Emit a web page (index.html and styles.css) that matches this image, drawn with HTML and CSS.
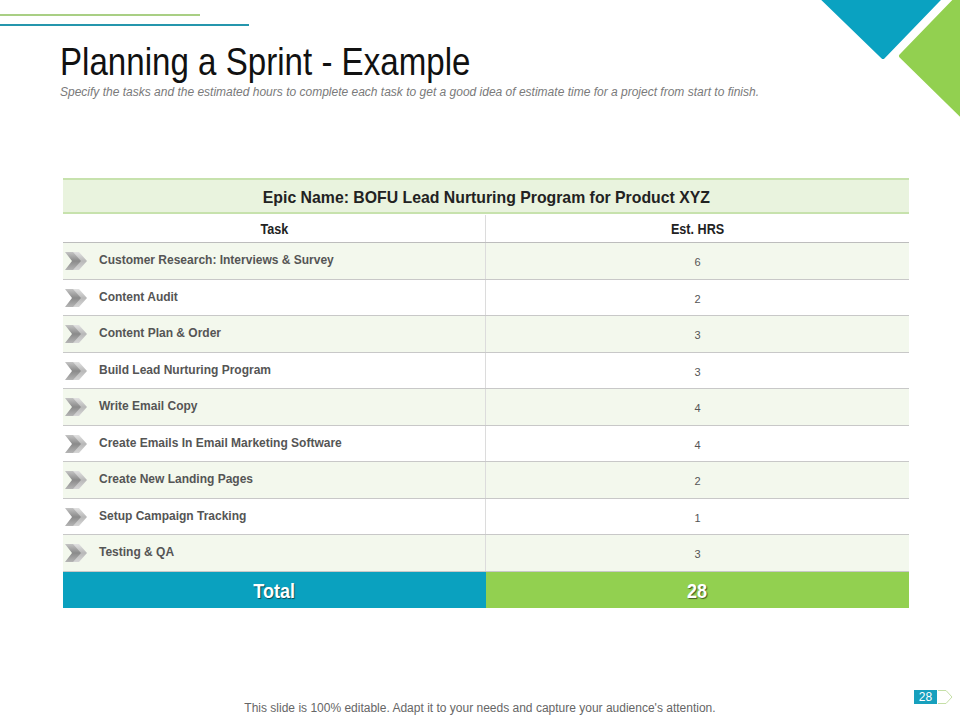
FILE: index.html
```html
<!DOCTYPE html>
<html>
<head>
<meta charset="utf-8">
<link rel="stylesheet" href="styles.css">
</head>
<body>
<div class="slide">
  <svg class="corner" width="160" height="120" viewBox="0 0 160 120">
    <polygon points="20,-4 142,-4 83,57" fill="#0aa2c1" stroke="#0aa2c1" stroke-width="4" stroke-linejoin="round"/>
    <polygon points="101,56 157,-2 164,-2 164,118" fill="#92d050" stroke="#92d050" stroke-width="4" stroke-linejoin="round"/>
  </svg>
  <div class="lines">
    <div class="line line-green"></div>
    <div class="line line-teal"></div>
  </div>
  <header class="head">
    <h1 class="title"><span class="narrow">Planning a Sprint - Example</span></h1>
    <p class="subtitle">Specify the tasks and the estimated hours to complete each task to get a good idea of estimate time for a project from start to finish.</p>
  </header>

  <section class="table">
    <div class="epic"><span class="narrow">Epic Name: BOFU Lead Nurturing Program for Product XYZ</span></div>
    <div class="row colhead">
      <div class="cell task-h"><span class="narrow">Task</span></div>
      <div class="cell"><span class="narrow">Est. HRS</span></div>
    </div>
    <div class="row tint">
      <div class="cell task"><svg class="chev" viewBox="0 0 24 20"><use href="#chv"/></svg><span>Customer Research: Interviews &amp; Survey</span></div>
      <div class="cell num">6</div>
    </div>
    <div class="row">
      <div class="cell task"><svg class="chev" viewBox="0 0 24 20"><use href="#chv"/></svg><span>Content Audit</span></div>
      <div class="cell num">2</div>
    </div>
    <div class="row tint">
      <div class="cell task"><svg class="chev" viewBox="0 0 24 20"><use href="#chv"/></svg><span>Content Plan &amp; Order</span></div>
      <div class="cell num">3</div>
    </div>
    <div class="row">
      <div class="cell task"><svg class="chev" viewBox="0 0 24 20"><use href="#chv"/></svg><span>Build Lead Nurturing Program</span></div>
      <div class="cell num">3</div>
    </div>
    <div class="row tint">
      <div class="cell task"><svg class="chev" viewBox="0 0 24 20"><use href="#chv"/></svg><span>Write Email Copy</span></div>
      <div class="cell num">4</div>
    </div>
    <div class="row">
      <div class="cell task"><svg class="chev" viewBox="0 0 24 20"><use href="#chv"/></svg><span>Create Emails In Email Marketing Software</span></div>
      <div class="cell num">4</div>
    </div>
    <div class="row tint">
      <div class="cell task"><svg class="chev" viewBox="0 0 24 20"><use href="#chv"/></svg><span>Create New Landing Pages</span></div>
      <div class="cell num">2</div>
    </div>
    <div class="row">
      <div class="cell task"><svg class="chev" viewBox="0 0 24 20"><use href="#chv"/></svg><span>Setup Campaign Tracking</span></div>
      <div class="cell num">1</div>
    </div>
    <div class="row tint">
      <div class="cell task"><svg class="chev" viewBox="0 0 24 20"><use href="#chv"/></svg><span>Testing &amp; QA</span></div>
      <div class="cell num">3</div>
    </div>
    <div class="total">
      <div class="tcell tleft"><span class="narrow">Total</span></div>
      <div class="tcell tright"><span class="narrow">28</span></div>
    </div>
  </section>

  <footer class="foot">
    <div class="pagerow">
      <span class="pagenum">28</span>
      <svg class="pagearrow" width="16" height="14" viewBox="0 0 16 14"><polyline points="1,0.5 9,0.5 15,7 9,13.5 1,13.5" fill="none" stroke="#c5dfa6" stroke-width="1"/></svg>
    </div>
    <p class="note">This slide is 100% editable. Adapt it to your needs and capture your audience's attention.</p>
  </footer>

  <svg width="0" height="0" class="defs">
    <defs>
      <linearGradient id="g1" x1="0" y1="0" x2="0" y2="1">
        <stop offset="0" stop-color="#c4c4c4"/>
        <stop offset="0.5" stop-color="#8a8a8a"/>
        <stop offset="1" stop-color="#b5b5b5"/>
      </linearGradient>
      <linearGradient id="g2" x1="0" y1="0" x2="0" y2="1">
        <stop offset="0" stop-color="#e2e2e2"/>
        <stop offset="0.5" stop-color="#b8b8b8"/>
        <stop offset="1" stop-color="#d6d6d6"/>
      </linearGradient>
      <g id="chv">
        <polygon points="8,1 15,1 23,10 15,19 8,19 15,10" fill="url(#g2)"/>
        <polygon points="1,1 9,1 17,10 9,19 1,19 8,10" fill="url(#g1)"/>
      </g>
    </defs>
  </svg>
</div>
</body>
</html>
```

FILE: styles.css
```css
* { box-sizing: border-box; }
html, body { margin: 0; padding: 0; background: #fff; }
.slide {
  position: relative;
  width: 960px;
  height: 720px;
  overflow: hidden;
  display: flex;
  flex-direction: column;
  font-family: "Liberation Sans", Arial, sans-serif;
}
.corner { position: absolute; top: 0; right: 0; }
.defs { position: absolute; }
.narrow { display: inline-block; transform: scaleX(0.9); white-space: nowrap; }
.lines { padding-top: 14px; display: flex; flex-direction: column; gap: 8px; }
.line { height: 2px; }
.line-green { width: 200px; background: #a9cf84; }
.line-teal { width: 249px; background: #2596ad; }

.head { padding-left: 60px; }
.title {
  margin: 16px 0 0;
  font-weight: normal;
  font-size: 39px;
  line-height: 39px;
  color: #111;
}
.title .narrow { transform: scaleX(0.849); transform-origin: 0 50%; }
.subtitle {
  margin: 4px 0 0;
  font-style: italic;
  font-size: 12px;
  line-height: 14px;
  color: #7a7a7a;
}

.table { margin: 79px 0 0 63px; width: 846px; }
.epic {
  height: 36px;
  background: #e9f3de;
  border-top: 2px solid #c7e2ad;
  border-bottom: 2px solid #c7e2ad;
  display: flex;
  align-items: center;
  justify-content: center;
  padding-top: 3px;
  font-weight: bold;
  font-size: 17px;
  color: #222;
}
.epic .narrow { transform: scaleX(0.93); }
.row {
  display: grid;
  grid-template-columns: 423px 423px;
  height: 36.5px;
  border-bottom: 1px solid #c8c8c8;
}
.row.tint { background: #f3f8ed; }
.colhead {
  height: 29px;
  font-weight: bold;
  font-size: 14px;
  color: #222;
  border-bottom: 1px solid #bdbdbd;
  padding-top: 1px;
}
.cell {
  display: flex;
  align-items: center;
  justify-content: center;
}
.cell:first-child { border-right: 1px solid #dcdcdc; }
.task {
  justify-content: flex-start;
  padding-left: 1px;
  font-weight: bold;
  font-size: 12px;
  color: #555;
  padding-bottom: 1px;
}
.chev { width: 24px; height: 20px; margin-top: 2px; flex: none; }
.task span { margin-left: 11px; }
.num { font-size: 11px; color: #555; padding-top: 3px; }

.total { display: grid; grid-template-columns: 423px 423px; height: 36px; }
.tcell {
  display: flex;
  align-items: center;
  justify-content: center;
  padding-top: 4px;
  color: #fff;
  font-weight: bold;
  font-size: 20px;
  text-shadow: 1px 1px 1px rgba(0,0,0,0.55);
}
.tleft { background: #0aa1bf; }
.tright { background: #92d050; }

.foot { margin-top: auto; padding-bottom: 5px; }
.pagerow { display: flex; justify-content: flex-end; padding-right: 7px; height: 14px; }
.pagenum {
  width: 23px;
  height: 14px;
  background: #17a0bd;
  color: #fff;
  font-size: 12px;
  line-height: 14px;
  text-align: center;
}
.pagearrow { display: block; }
.note {
  margin: -2px 0 0;
  text-align: center;
  font-size: 12px;
  line-height: 13px;
  color: #666;
}
```
